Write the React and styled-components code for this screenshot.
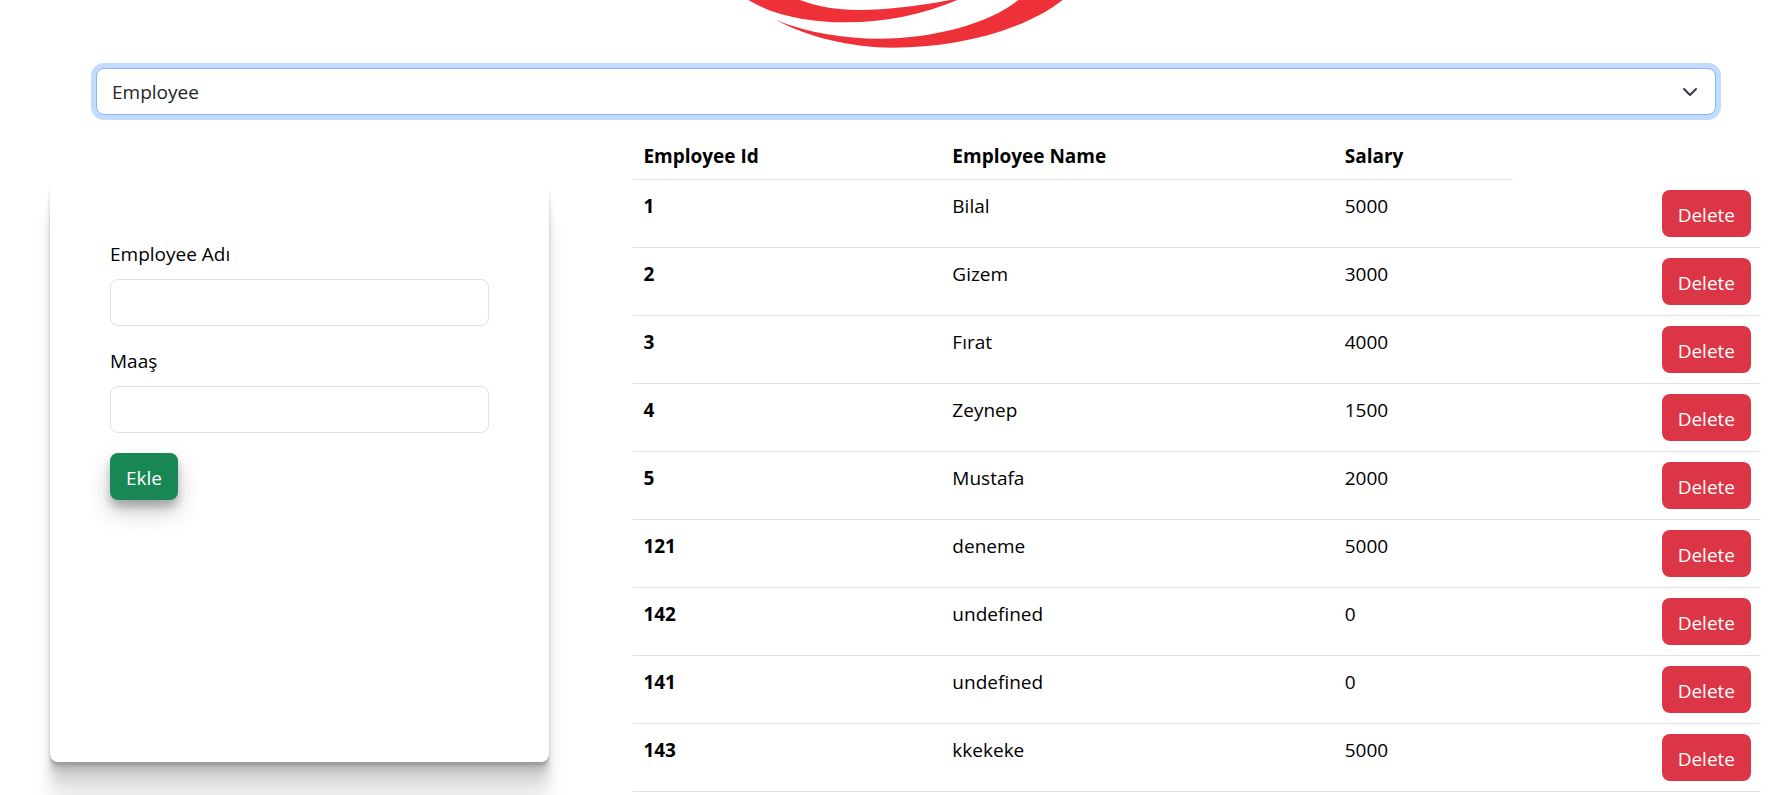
import React, { useState } from "react";
import styled, { createGlobalStyle } from "styled-components";

const GlobalStyle = createGlobalStyle`
  *, *::before, *::after { box-sizing: border-box; }
  body {
    margin: 0;
    min-height: 100vh;
    background: #fff;
    color: #212529;
    font-family: "Open Sans", "Noto Sans", sans-serif;
    font-size: 19px;
    line-height: 30px;
  }
  button, input, select { font: inherit; }
`;

const cardShadow = `
  0 3px 1px rgba(0, 0, 0, 0.09),
  0 5px 3px rgba(0, 0, 0, 0.09),
  0 10px 5px rgba(0, 0, 0, 0.09),
  0 20px 10px rgba(0, 0, 0, 0.09),
  0 40px 20px rgba(0, 0, 0, 0.09)
`;

const buttonShadow = `
  0 12px 25px rgba(0, 0, 0, 0.19),
  0 7px 8px rgba(0, 0, 0, 0.23)
`;

const Page = styled.div`
  min-height: 100vh;
`;

const Top = styled.header`
  display: flex;
  flex-direction: column;
  align-items: center;
  gap: 20px;
  padding: 0 65px 0 96px;
`;

const Logo = styled.svg`
  display: block;
  width: 370px;
  height: 48px;
  fill: #ee3138;
`;

const SelectWrap = styled.div`
  position: relative;
  width: 100%;
`;

const EntitySelect = styled.select`
  display: block;
  appearance: none;
  width: 100%;
  height: 47px;
  padding: 0 45px 0 15px;
  border: 1px solid #86b7fe;
  border-radius: 8px;
  outline: none;
  background: #fff;
  color: #212529;
  box-shadow: 0 0 0 5px rgba(13, 110, 253, 0.25);
`;

const Chevron = styled.svg`
  position: absolute;
  top: 50%;
  right: 18px;
  width: 16px;
  height: 16px;
  transform: translateY(-50%);
  fill: none;
  stroke: #343a40;
  stroke-width: 2;
  stroke-linecap: round;
  stroke-linejoin: round;
  pointer-events: none;
`;

const Main = styled.main`
  display: grid;
  grid-template-columns: minmax(0, 31fr) minmax(0, 70fr);
  align-items: start;
  gap: 84px;
  padding: 15px 20px 0 50px;
`;

const FormCard = styled.form`
  min-height: 583px;
  margin-top: 49px;
  padding: 60px;
  border-radius: 8px;
  background: #fff;
  color: #000;
  box-shadow: ${cardShadow};
`;

const Field = styled.div`
  display: flex;
  flex-direction: column;
  gap: 10px;
  margin-bottom: 20px;
`;

const TextInput = styled.input`
  width: 100%;
  height: 47px;
  padding: 0 15px;
  border: 1px solid #dee2e6;
  border-radius: 8px;
  background: #fff;
  color: #212529;
`;

const Button = styled.button`
  display: inline-block;
  height: 47px;
  padding: 3px 16px 0;
  border: 0;
  border-radius: 8px;
  background: ${(p) => (p.$variant === "success" ? "#198754" : "#dc3545")};
  box-shadow: ${(p) => (p.$raised ? buttonShadow : "none")};
  color: #fff;
  cursor: pointer;
`;

const Table = styled.table`
  width: 100%;
  table-layout: fixed;
  border-collapse: separate;
  border-spacing: 0;
  color: #000;
`;

const Col = styled.col`
  width: ${(p) => p.$share}%;
`;

const HeadCell = styled.th`
  padding: 11px 10px 8px;
  border-bottom: 1px solid #dee2e6;
  text-align: left;
  font-weight: 700;
`;

const RowHead = styled.th`
  padding: 11px 10px 9px;
  border-bottom: 1px solid #dee2e6;
  text-align: left;
  vertical-align: top;
  font-weight: 700;
`;

const Cell = styled.td`
  padding: 11px 10px 9px;
  border-bottom: 1px solid #dee2e6;
  vertical-align: top;
`;

const ActionCell = styled.td`
  padding: 10px;
  border-bottom: 1px solid #dee2e6;
  vertical-align: top;

  ${Button} {
    display: block;
    margin-left: auto;
  }
`;

const employees = [
  { id: 1, name: "Bilal", salary: 5000 },
  { id: 2, name: "Gizem", salary: 3000 },
  { id: 3, name: "Fırat", salary: 4000 },
  { id: 4, name: "Zeynep", salary: 1500 },
  { id: 5, name: "Mustafa", salary: 2000 },
  { id: 121, name: "deneme", salary: 5000 },
  { id: 142, name: "undefined", salary: 0 },
  { id: 141, name: "undefined", salary: 0 },
  { id: 143, name: "kkekeke", salary: 5000 },
];

export default function App() {
  const [rows, setRows] = useState(employees);
  const remove = (id) => setRows(rows.filter((row) => row.id !== id));

  return (
    <Page>
      <GlobalStyle />
      <Top>
        <Logo viewBox="3 0 1110 144" aria-hidden="true">
          <path d="M85 0C160 46 265 67 380 67C500 67 610 43 712 0H690C610 16 500 30 415 30C350 30 290 20 240 0Z" />
          <path d="M168 60C260 98 370 116 480 116C640 116 810 70 895 0H1028C900 100 690 143 520 143C390 143 260 110 168 60Z" />
        </Logo>
        <SelectWrap>
          <EntitySelect aria-label="Entity" defaultValue="Employee">
            <option>Employee</option>
          </EntitySelect>
          <Chevron viewBox="0 0 16 16" aria-hidden="true">
            <path d="m2 5 6 6 6-6" />
          </Chevron>
        </SelectWrap>
      </Top>
      <Main>
        <FormCard onSubmit={(event) => event.preventDefault()}>
          <Field>
            <label htmlFor="employee-name">Employee Adı</label>
            <TextInput id="employee-name" type="text" />
          </Field>
          <Field>
            <label htmlFor="employee-salary">Maaş</label>
            <TextInput id="employee-salary" type="text" />
          </Field>
          <Button type="submit" $variant="success" $raised>
            Ekle
          </Button>
        </FormCard>
        <Table>
          <colgroup>
            <Col $share={27.4} />
            <Col $share={34.8} />
            <Col $share={15.8} />
            <Col $share={22} />
          </colgroup>
          <thead>
            <tr>
              <HeadCell scope="col">Employee Id</HeadCell>
              <HeadCell scope="col">Employee Name</HeadCell>
              <HeadCell scope="col">Salary</HeadCell>
            </tr>
          </thead>
          <tbody>
            {rows.map((row) => (
              <tr key={row.id}>
                <RowHead scope="row">{row.id}</RowHead>
                <Cell>{row.name}</Cell>
                <Cell>{row.salary}</Cell>
                <ActionCell>
                  <Button type="button" onClick={() => remove(row.id)}>
                    Delete
                  </Button>
                </ActionCell>
              </tr>
            ))}
          </tbody>
        </Table>
      </Main>
    </Page>
  );
}
